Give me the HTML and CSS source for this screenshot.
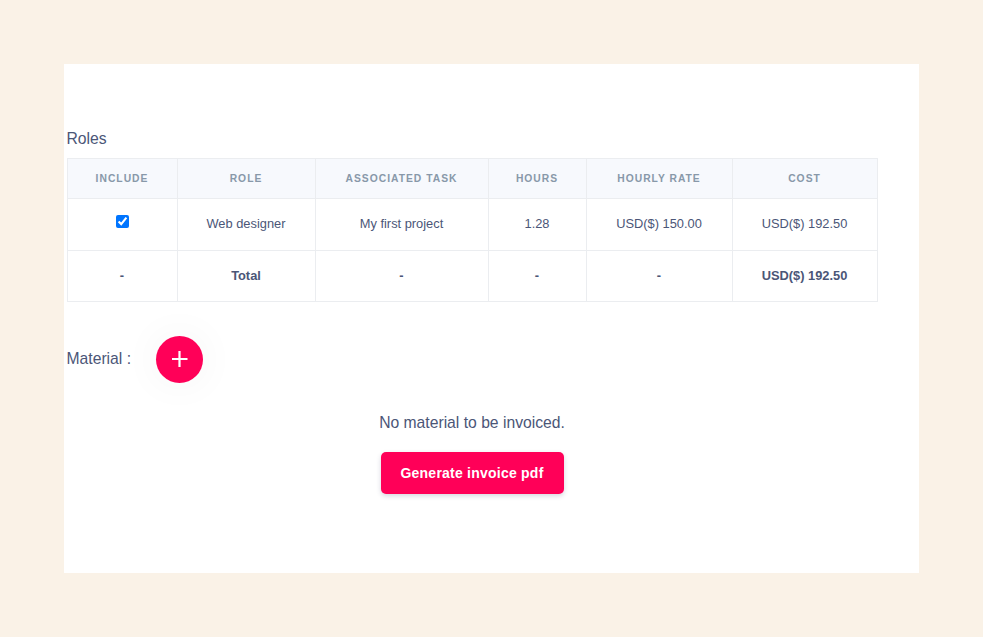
FILE: index.html
```
<!DOCTYPE html>
<html lang="en">

<head>
    <meta charset="UTF-8">
    <meta name="viewport" content="width=device-width, initial-scale=1.0">
    <title>Invoice</title>
    <link rel="stylesheet" href="styles.css">
</head>

<body>
    <main class="invoice">
        <h2 class="section-title">Roles</h2>
        <table class="roles">
            <colgroup>
                <col class="col-include">
                <col class="col-role">
                <col class="col-task">
                <col class="col-hours">
                <col class="col-rate">
                <col class="col-cost">
            </colgroup>
            <thead>
                <tr>
                    <th>Include</th>
                    <th>Role</th>
                    <th>Associated task</th>
                    <th>Hours</th>
                    <th>Hourly rate</th>
                    <th>Cost</th>
                </tr>
            </thead>
            <tbody>
                <tr>
                    <td><input type="checkbox" checked aria-label="Include"></td>
                    <td>Web designer</td>
                    <td>My first project</td>
                    <td>1.28</td>
                    <td>USD($) 150.00</td>
                    <td>USD($) 192.50</td>
                </tr>
                <tr class="total">
                    <td>-</td>
                    <td>Total</td>
                    <td>-</td>
                    <td>-</td>
                    <td>-</td>
                    <td>USD($) 192.50</td>
                </tr>
            </tbody>
        </table>

        <div class="material">
            <span class="material-label">Material :</span>
            <button class="add-button" aria-label="Add material">
                <svg width="16" height="16" viewBox="0 0 16 16">
                    <path d="M7.5 0v16M0 8h15.5" stroke="#fff" stroke-width="2.2" />
                </svg>
            </button>
        </div>

        <div class="footer">
            <p>No material to be invoiced.</p>
            <button class="generate-button">Generate invoice pdf</button>
        </div>
    </main>
</body>

</html>
```
FILE: styles.css
```
body {
    margin: 0;
    padding: 64px;
    background-color: #faf2e7;
    color: #4b5677;
    font-family: "Liberation Sans", Arial, sans-serif;
    font-size: 15.7px;
}

.invoice {
    box-sizing: border-box;
    width: 855px;
    height: 509px;
    padding: 64px 41px 0 2.5px;
    background-color: #fff;
}

.section-title {
    margin: 0;
    height: 30px;
    line-height: 21px;
    font-size: 15.7px;
    font-weight: normal;
}

.roles {
    width: 811px;
    table-layout: fixed;
    border-collapse: collapse;
    text-align: center;
    font-size: 12.85px;
}

.col-include {
    width: 110px;
}

.col-role {
    width: 138px;
}

.col-task {
    width: 173px;
}

.col-hours {
    width: 98px;
}

.col-rate {
    width: 146px;
}

.col-cost {
    width: 145px;
}

.roles th,
.roles td {
    padding: 0;
    border: 1px solid #ebedf0;
}

.roles th {
    height: 39px;
    background-color: #f7f9fd;
    color: #8898a9;
    font-size: 10.3px;
    letter-spacing: 1px;
    text-transform: uppercase;
}

.roles td {
    height: 49px;
    padding-bottom: 2px;
}

.roles .total td {
    height: 48px;
    font-weight: bold;
}

.roles input {
    display: block;
    width: 13px;
    height: 13px;
    margin: 0 auto 4px;
}

.material {
    display: flex;
    align-items: center;
    height: 47px;
    margin-top: 34px;
}

.material-label {
    width: 89.5px;
    padding-bottom: 2px;
}

.add-button {
    display: flex;
    align-items: center;
    justify-content: center;
    width: 47px;
    height: 47px;
    padding: 0 0 2px;
    border: none;
    border-radius: 50%;
    background-color: #ff0058;
    box-shadow: 0 0 40px rgba(0, 0, 0, 0.05);
}

.footer {
    display: flex;
    flex-direction: column;
    align-items: center;
    width: 811px;
    margin-top: 30px;
}

.footer p {
    margin: 0 0 19px;
    line-height: 20px;
}

.generate-button {
    width: 183px;
    height: 42px;
    padding: 0 0 1px;
    border: none;
    border-radius: 5px;
    background-color: #ff0058;
    box-shadow: 0 2px 5px rgba(50, 50, 93, 0.2);
    color: #fff;
    font-family: inherit;
    font-size: 14px;
    font-weight: bold;
    letter-spacing: 0.23px;
}
```
